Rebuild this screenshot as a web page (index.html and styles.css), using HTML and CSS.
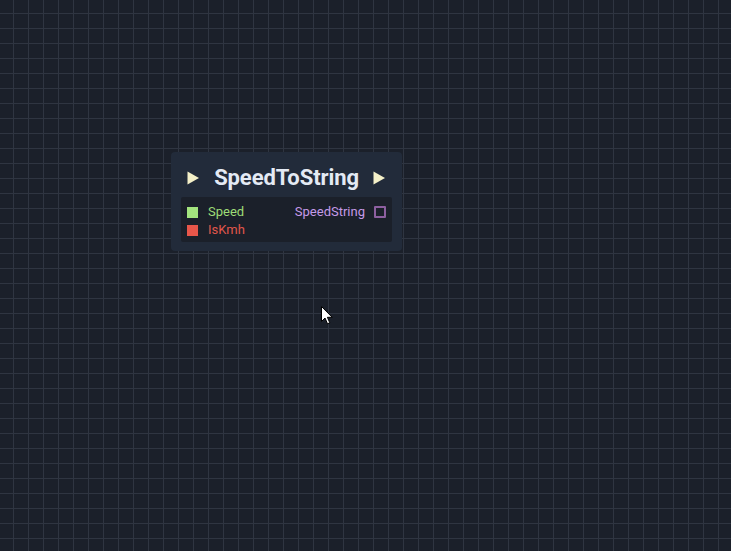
FILE: index.html
```html
<!DOCTYPE html>
<html>
<head>
<meta charset="utf-8">
<link rel="stylesheet" href="styles.css">
</head>
<body>
<div class="canvas">
  <div class="node">
    <div class="node-header">
      <svg class="exec" width="13" height="14" viewBox="0 0 13 14"><path d="M0.5 0.5 L12 7 L0.5 13.5 Z" fill="#f4f0c8"/></svg>
      <span class="title">SpeedToString</span>
      <svg class="exec" width="13" height="14" viewBox="0 0 13 14"><path d="M0.5 0.5 L12 7 L0.5 13.5 Z" fill="#f4f0c8"/></svg>
    </div>
    <div class="node-body">
      <div class="pins pins-in">
        <div class="pin">
          <span class="sq sq-green"></span>
          <span class="label label-green">Speed</span>
        </div>
        <div class="pin">
          <span class="sq sq-red"></span>
          <span class="label label-red">IsKmh</span>
        </div>
      </div>
      <div class="pins pins-out">
        <div class="pin">
          <span class="label label-purple">SpeedString</span>
          <span class="sq sq-out"></span>
        </div>
      </div>
    </div>
  </div>
  <svg class="cursor" width="13" height="20" viewBox="0 0 13 20">
    <path d="M0.5 0.5 L0.5 15.5 L4 12 L6.5 17.8 L8.8 16.8 L6.4 11.3 L11.2 11.3 Z" fill="#ffffff" stroke="#000000" stroke-width="1"/>
  </svg>
</div>
</body>
</html>
```
FILE: styles.css
```css
* { box-sizing: border-box; }
html, body {
  margin: 0;
  padding: 0;
  width: 731px;
  height: 551px;
  overflow: hidden;
}
body {
  background-color: #1b202a;
  background-image:
    linear-gradient(to right, #2f3541 1px, transparent 1px),
    linear-gradient(to bottom, #2f3541 1px, transparent 1px);
  background-size: 15px 15px;
  background-position: 13px 13px;
  font-family: Roboto, "Liberation Sans", sans-serif;
}
.canvas {
  position: relative;
  width: 731px;
  height: 551px;
}
.node {
  position: absolute;
  left: 171px;
  top: 152px;
  width: 231px;
  height: 99px;
  background: #222b3a;
  border-radius: 4px;
  padding: 0 10px 9px 10px;
  display: flex;
  flex-direction: column;
}
.node-header {
  height: 45px;
  padding: 6px 6px 0 6px;
  display: flex;
  align-items: center;
  justify-content: space-between;
}
.exec { display: block; }
.title {
  color: #e4eaf4;
  font-weight: 700;
  font-size: 22px;
  letter-spacing: -0.1px;
}
.node-body {
  flex: 1;
  background: #1b202a;
  border-radius: 2px;
  padding: 6px 6px 3px 6px;
  display: flex;
  justify-content: space-between;
}
.pins { display: flex; flex-direction: column; }
.pin {
  height: 18px;
  display: flex;
  align-items: center;
  gap: 10px;
}
.pins-out .pin { gap: 9px; }
.sq {
  width: 11px;
  height: 11px;
  display: block;
}
.sq-green { background: #a3e47e; }
.sq-red { background: #e8564a; }
.sq-out {
  width: 12px;
  height: 12px;
  border: 2px solid #8d5fa0;
  border-radius: 1px;
}
.label {
  font-size: 13px;
  line-height: 18px;
}
.label-green { color: #9ddc77; }
.label-red { color: #e0564a; }
.label-purple { color: #c59ae8; }
.cursor {
  position: absolute;
  left: 321px;
  top: 306px;
}
```
